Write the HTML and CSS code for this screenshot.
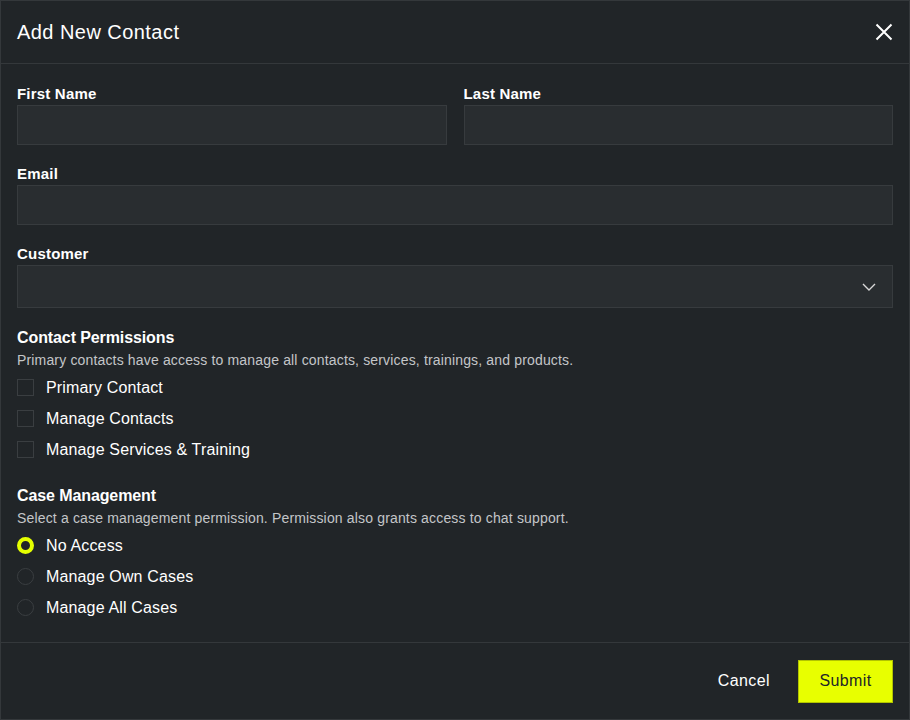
FILE: index.html
```html
<!DOCTYPE html>
<html>
<head>
<meta charset="utf-8" />
<title>Add New Contact</title>
<link rel="stylesheet" href="styles.css">
</head>
<body>
<div class="modal">
  <div class="modal-header">
    <h2 class="modal-title">Add New Contact</h2>
    <button type="button" class="btn-close" aria-label="Close">
      <svg width="18" height="18" viewBox="0 0 18 18"><path d="M1.5 1.5 L16.5 16.5 M16.5 1.5 L1.5 16.5" stroke="#fff" stroke-width="2" fill="none"/></svg>
    </button>
  </div>

  <form class="modal-body">
    <div class="row">
      <div class="field">
        <label for="firstName" class="field-label">First Name</label>
        <input type="text" id="firstName" class="input" />
      </div>
      <div class="field">
        <label for="lastName" class="field-label">Last Name</label>
        <input type="text" id="lastName" class="input" />
      </div>
    </div>

    <div class="field">
      <label for="email" class="field-label">Email</label>
      <input type="text" id="email" class="input" />
    </div>

    <div class="field">
      <label for="customer" class="field-label">Customer</label>
      <div class="select" id="customer">
        <svg width="14" height="8" viewBox="0 0 14 8"><path d="M1 1 L7 7 L13 1" stroke="#d8d8d8" stroke-width="1.4" fill="none"/></svg>
      </div>
    </div>

    <div class="group">
      <div class="group-title">Contact Permissions</div>
      <div class="group-desc">Primary contacts have access to manage all contacts, services, trainings, and products.</div>
      <label class="check"><span class="box"></span>Primary Contact</label>
      <label class="check"><span class="box"></span>Manage Contacts</label>
      <label class="check"><span class="box"></span>Manage Services &amp; Training</label>
    </div>

    <div class="group">
      <div class="group-title">Case Management</div>
      <div class="group-desc">Select a case management permission. Permission also grants access to chat support.</div>
      <label class="check"><span class="radio checked"></span>No Access</label>
      <label class="check"><span class="radio"></span>Manage Own Cases</label>
      <label class="check"><span class="radio"></span>Manage All Cases</label>
    </div>
  </form>

  <div class="modal-footer">
    <button type="button" class="btn-link">Cancel</button>
    <button type="button" class="btn-primary">Submit</button>
  </div>
</div>
</body>
</html>
```

FILE: styles.css
```css
html, body {
  margin: 0;
  padding: 0;
  background: #1b1e21;
}

body {
  font-family: "Liberation Sans", Arial, sans-serif;
  color: #fff;
}

.modal {
  width: 908px;
  height: 718px;
  background: #212528;
  border: 1px solid #34383b;
  display: flex;
  flex-direction: column;
}

.modal-header {
  height: 62px;
  flex: none;
  display: flex;
  align-items: center;
  justify-content: space-between;
  padding: 0 16px;
  border-bottom: 1px solid #34383b;
}

.modal-title {
  margin: 0;
  font-size: 20px;
  font-weight: normal;
  letter-spacing: 0.45px;
}

.btn-close {
  background: none;
  border: 0;
  padding: 0;
  width: 18px;
  height: 18px;
  cursor: pointer;
}

.modal-body {
  padding: 21px 16px 0 16px;
  flex: 1;
  min-height: 0;
}

.row {
  display: flex;
  gap: 17px;
}

.row .field {
  flex: 1;
}

.field {
  margin-bottom: 20px;
}

.field-label {
  display: block;
  font-size: 15px;
  font-weight: bold;
  letter-spacing: 0.2px;
  margin-bottom: 3px;
}

.input {
  display: block;
  box-sizing: border-box;
  width: 100%;
  height: 40px;
  background: #292d30;
  border: 1px solid #373b3e;
  color: #fff;
  font: inherit;
  padding: 0 12px;
}

.select {
  box-sizing: border-box;
  height: 43px;
  margin-top: 2px;
  background: #292d30;
  border: 1px solid #373b3e;
  display: flex;
  align-items: center;
  justify-content: flex-end;
  padding-right: 16px;
}

.group {
  margin-bottom: 22px;
}

.group:last-child {
  margin-bottom: 0;
}

.group-title {
  font-size: 16px;
  font-weight: bold;
  letter-spacing: -0.1px;
  margin-top: 21px;
}

.group-desc {
  font-size: 14px;
  color: #c4c6c8;
  margin-top: 5px;
  margin-bottom: 4px;
  letter-spacing: 0.16px;
}

.check {
  display: flex;
  align-items: center;
  height: 31px;
  font-size: 16px;
  letter-spacing: 0.15px;
}

.box {
  box-sizing: border-box;
  width: 17px;
  height: 17px;
  border: 1px solid #3a3e41;
  margin-right: 12px;
}

.radio {
  box-sizing: border-box;
  width: 17px;
  height: 17px;
  border-radius: 50%;
  border: 1px solid #3a3e41;
  margin-right: 12px;
}

.radio.checked {
  border: 4px solid #e5ff00;
  background: #212528;
}

.modal-footer {
  height: 76px;
  flex: none;
  border-top: 1px solid #34383b;
  display: flex;
  align-items: center;
  justify-content: flex-end;
  padding: 0 16px 0 15px;
  gap: 28px;
}

.btn-link {
  background: none;
  border: 0;
  color: #fff;
  font: inherit;
  font-size: 16px;
  letter-spacing: 0.4px;
  padding: 0;
  cursor: pointer;
}

.btn-primary {
  width: 95px;
  height: 43px;
  background: #e8ff00;
  border: 1px solid #b2c400;
  color: #212528;
  font: inherit;
  font-size: 16px;
  letter-spacing: 0.4px;
  cursor: pointer;
}
```
